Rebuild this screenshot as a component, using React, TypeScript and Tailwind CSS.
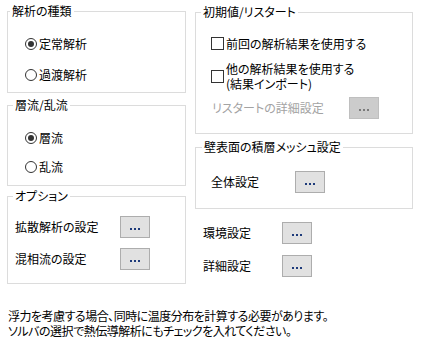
import React from "react";

const font = { fontFamily: '"Noto Sans CJK JP", "Noto Sans", sans-serif' };

function Dots({ disabled }: { disabled?: boolean }) {
  return (
    <button
      className={
        disabled
          ? "w-[30px] h-[22px] flex items-center justify-center border border-[#bfbfbf] bg-[#cccccc]"
          : "w-[30px] h-[22px] flex items-center justify-center border border-[#adadad] bg-[#e1e1e1]"
      }
    >
      <span className="flex gap-[2px] pt-[4px]">
        <span className={disabled ? "w-[2px] h-[2px] bg-[#7a7a7a]" : "w-[2px] h-[2px] bg-[#1d3a7a]"} />
        <span className={disabled ? "w-[2px] h-[2px] bg-[#7a7a7a]" : "w-[2px] h-[2px] bg-[#1d3a7a]"} />
        <span className={disabled ? "w-[2px] h-[2px] bg-[#7a7a7a]" : "w-[2px] h-[2px] bg-[#1d3a7a]"} />
      </span>
    </button>
  );
}

function Radio({ checked, label }: { checked?: boolean; label: string }) {
  return (
    <div className="flex items-center h-4 gap-[2px]">
      <span className="w-[12px] h-[12px] rounded-full border border-[#333333] bg-white flex items-center justify-center">
        {checked && <span className="w-[6px] h-[6px] rounded-full bg-[#333333]" />}
      </span>
      <span>{label}</span>
    </div>
  );
}

function Check({ children }: { children: React.ReactNode }) {
  return (
    <div className="flex items-center gap-[2px]">
      <span className="w-[13px] h-[13px] border border-[#333333] bg-white shrink-0" />
      <span className="leading-[15px]">{children}</span>
    </div>
  );
}

export default function App() {
  return (
    <div
      className="w-[424px] h-[363px] bg-white text-[12px] leading-[14px] text-black pt-[4px] [font-feature-settings:'palt']"
      style={font}
    >
      <div className="flex h-[300px]">
        {/* left column */}
        <div className="w-[179px] ml-[7px] flex flex-col">
          <fieldset className="h-[89px] border border-[#dcdcdc]">
            <legend className="ml-[2px] px-[2px]">解析の種類</legend>
            <div className="flex flex-col gap-[15px] pl-[17px] pt-[18px]">
              <Radio checked label="定常解析" />
              <Radio label="過渡解析" />
            </div>
          </fieldset>
          <fieldset className="h-[88px] mt-[5px] border border-[#dcdcdc]">
            <legend className="ml-[5px] px-[2px]">層流/乱流</legend>
            <div className="flex flex-col gap-[13px] pl-[17px] pt-[18px]">
              <Radio checked label="層流" />
              <Radio label="乱流" />
            </div>
          </fieldset>
          <fieldset className="h-[95px] mt-[3px] border border-[#dcdcdc]">
            <legend className="ml-[5px] px-[2px]">オプション</legend>
            <div className="flex flex-col gap-[10px] pl-[7px] pt-[13px]">
              <div className="flex items-center">
                <span className="w-[105px]">拡散解析の設定</span>
                <Dots />
              </div>
              <div className="flex items-center">
                <span className="w-[105px]">混相流の設定</span>
                <Dots />
              </div>
            </div>
          </fieldset>
        </div>

        {/* right column */}
        <div className="w-[218px] ml-[9px] flex flex-col">
          <fieldset className="h-[129px] mt-[1px] border border-[#dcdcdc]">
            <legend className="ml-[5px] px-[2px]">初期値/リスタート</legend>
            <div className="flex flex-col pl-[15px] pt-[17px]">
              <Check>前回の解析結果を使用する</Check>
              <div className="mt-[10px]">
                <Check>
                  他の解析結果を使用する
                  <br />
                  (結果インポート)
                </Check>
              </div>
              <div className="flex items-center mt-[6px] pl-[1px]">
                <span className="w-[137px] text-[#a3a3a3]">リスタートの詳細設定</span>
                <Dots disabled />
              </div>
            </div>
          </fieldset>
          <fieldset className="h-[69px] mt-[6px] border border-[#dcdcdc]">
            <legend className="ml-[6px] px-[2px]">壁表面の積層メッシュ設定</legend>
            <div className="flex items-center pl-[15px] pt-[17px]">
              <span className="w-[84px]">全体設定</span>
              <Dots />
            </div>
          </fieldset>
          <div className="flex flex-col gap-[11px] pl-[8px] mt-[13px]">
            <div className="flex items-center">
              <span className="w-[79px]">環境設定</span>
              <Dots />
            </div>
            <div className="flex items-center">
              <span className="w-[79px]">詳細設定</span>
              <Dots />
            </div>
          </div>
        </div>
      </div>
      <div className="pl-[8px] pt-[4px] leading-[15px] tracking-[-0.5px]">
        <p>浮力を考慮する場合、同時に温度分布を計算する必要があります。</p>
        <p>ソルバの選択で熱伝導解析にもチェックを入れてください。</p>
      </div>
    </div>
  );
}
